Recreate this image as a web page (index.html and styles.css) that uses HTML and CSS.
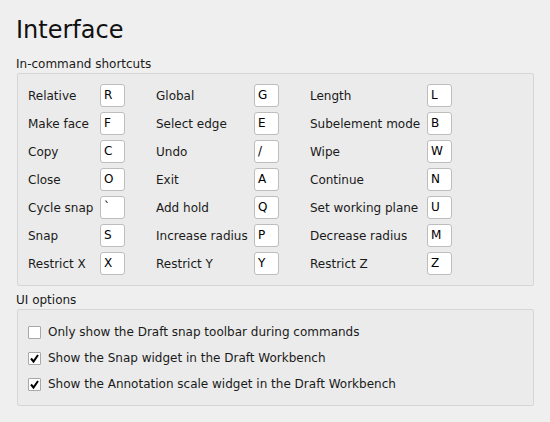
FILE: index.html
```html
<!DOCTYPE html>
<html>
<head>
<meta charset="utf-8">
<link rel="stylesheet" href="styles.css">
</head>
<body>
<div class="page">
  <h1 class="title">Interface</h1>
  <div class="group-label">In-command shortcuts</div>
  <div class="group shortcuts">
    <span class="lbl">Relative</span><span class="key">R</span>
    <span class="lbl">Global</span><span class="key">G</span>
    <span class="lbl">Length</span><span class="key">L</span>

    <span class="lbl">Make face</span><span class="key">F</span>
    <span class="lbl">Select edge</span><span class="key">E</span>
    <span class="lbl">Subelement mode</span><span class="key">B</span>

    <span class="lbl">Copy</span><span class="key">C</span>
    <span class="lbl">Undo</span><span class="key">/</span>
    <span class="lbl">Wipe</span><span class="key">W</span>

    <span class="lbl">Close</span><span class="key">O</span>
    <span class="lbl">Exit</span><span class="key">A</span>
    <span class="lbl">Continue</span><span class="key">N</span>

    <span class="lbl">Cycle snap</span><span class="key">`</span>
    <span class="lbl">Add hold</span><span class="key">Q</span>
    <span class="lbl">Set working plane</span><span class="key">U</span>

    <span class="lbl">Snap</span><span class="key">S</span>
    <span class="lbl">Increase radius</span><span class="key">P</span>
    <span class="lbl">Decrease radius</span><span class="key">M</span>

    <span class="lbl">Restrict X</span><span class="key">X</span>
    <span class="lbl">Restrict Y</span><span class="key">Y</span>
    <span class="lbl">Restrict Z</span><span class="key">Z</span>
  </div>
  <div class="group-label second">UI options</div>
  <div class="group options">
    <label class="opt"><span class="cb"></span><span>Only show the Draft snap toolbar during commands</span></label>
    <label class="opt"><span class="cb checked"><svg viewBox="0 0 13 13" width="13" height="13"><path d="M3 6.5 L5.5 9.5 L10 3" fill="none" stroke="#000" stroke-width="2"/></svg></span><span>Show the Snap widget in the Draft Workbench</span></label>
    <label class="opt"><span class="cb checked"><svg viewBox="0 0 13 13" width="13" height="13"><path d="M3 6.5 L5.5 9.5 L10 3" fill="none" stroke="#000" stroke-width="2"/></svg></span><span>Show the Annotation scale widget in the Draft Workbench</span></label>
  </div>
</div>
</body>
</html>
```
FILE: styles.css
```css
html, body {
  margin: 0;
  padding: 0;
  background: #efefef;
}
body {
  font-family: "DejaVu Sans", sans-serif;
  font-size: 12px;
  color: #1a1a1a;
}
.page {
  width: 517px;
  padding: 16px 0 0 17px;
}
.title {
  margin: 0 0 13px -1px;
  font-size: 24px;
  font-weight: normal;
  line-height: 28px;
  height: 28px;
  color: #111;
}
.group-label {
  line-height: 14px;
  margin-left: -1px;
  margin-bottom: 2px;
}
.group-label.second {
  margin-top: 7px;
}
.group {
  border: 1px solid #d6d6d6;
  border-radius: 2px;
  background: #ebebeb;
}
.shortcuts {
  display: grid;
  grid-template-columns: 72px 56px 98px 56px 117px 25px;
  row-gap: 5px;
  align-items: center;
  padding: 10px 0 10px 10px;
}
.lbl {
  white-space: nowrap;
  line-height: 14px;
}
.key {
  box-sizing: border-box;
  width: 25px;
  height: 23px;
  background: #fff;
  border: 1px solid #bdbdbd;
  border-radius: 3px;
  padding-left: 3px;
  line-height: 21px;
  color: #000;
}
.options {
  display: flex;
  flex-direction: column;
  gap: 10px;
  padding: 14px 0 13px 10px;
}
.opt {
  display: flex;
  align-items: center;
  height: 16px;
  gap: 7px;
}
.cb {
  box-sizing: border-box;
  width: 13px;
  height: 13px;
  background: #fff;
  border: 1px solid #a8a8a8;
  border-radius: 1px;
  display: flex;
  align-items: center;
  justify-content: center;
}
.cb svg {
  display: block;
  flex: none;
}
```
